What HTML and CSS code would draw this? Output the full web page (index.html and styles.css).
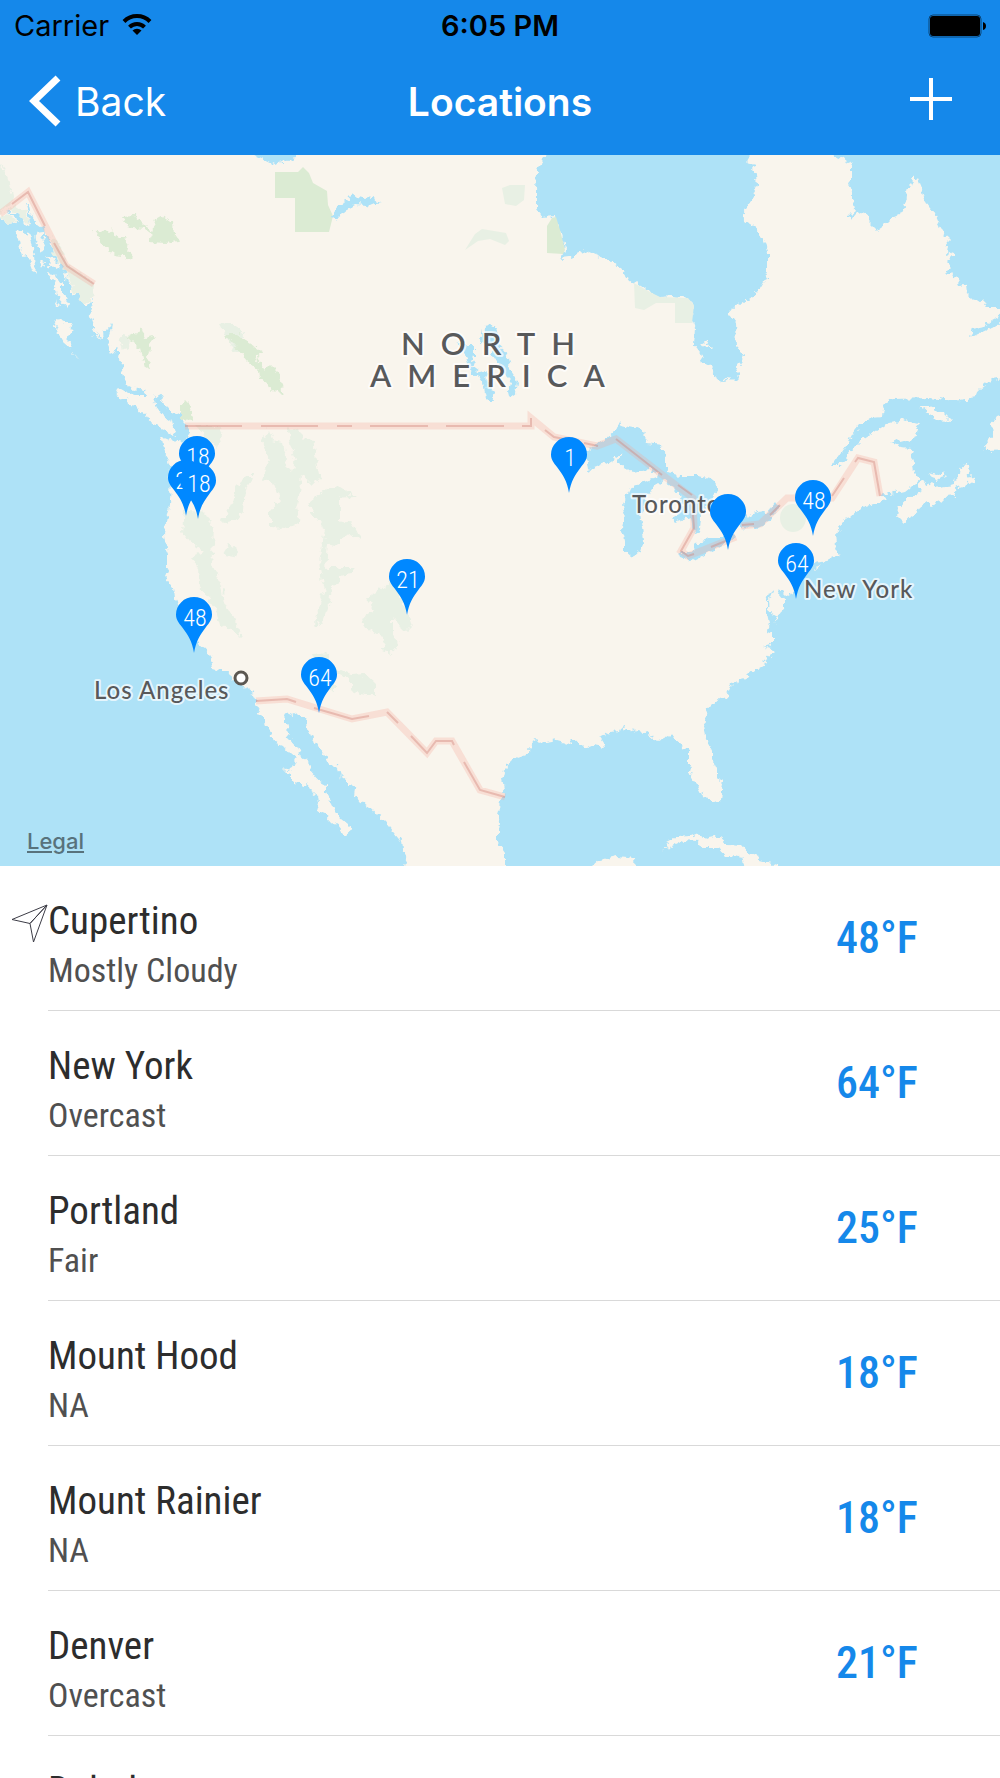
FILE: index.html
```html
<!DOCTYPE html>
<html lang="en">
<head>
  <meta charset="UTF-8">
  <meta name="viewport" content="width=device-width, initial-scale=1.0">
  <title>Locations</title>
  <link rel="stylesheet" href="styles.css">
</head>
<body>
  <header class="header">
    <div class="status-bar">
      <div class="carrier">
        <span>Carrier</span>
        <svg class="wifi" viewBox="0 0 30 22" aria-hidden="true">
          <path d="M15 22l-4.500-4.500a6.400 6.400 0 0 1 9 0z"/>
          <path class="wifi-arc" d="M7.500 14.200a10.600 10.600 0 0 1 15 0M2 8.500a18.400 18.400 0 0 1 26 0"/>
        </svg>
      </div>
      <span class="time">6:05 PM</span>
      <svg class="battery" viewBox="0 0 58 24" aria-hidden="true">
        <rect class="battery-frame" x="1" y="1" width="52" height="22" rx="4"/>
        <rect x="2" y="2" width="50" height="20" rx="3"/>
        <path d="M55 8q3 1 3 4t-3 4z"/>
      </svg>
    </div>
    <nav class="nav-bar">
      <a class="back" href="#">
        <svg class="chevron" viewBox="0 0 32 52" aria-hidden="true"><path d="M29 3L5 26l24 23"/></svg>
        <span>Back</span>
      </a>
      <h1 class="title">Locations</h1>
      <button class="add" type="button" aria-label="Add location">
        <svg class="plus" viewBox="0 0 42 42" aria-hidden="true"><path d="M21 0v42M0 21h42"/></svg>
      </button>
    </nav>
  </header>

  <main>
    <section class="map" aria-label="Map of locations">
      <svg class="map-canvas" viewBox="0 155 1000 711">
        <defs>
          <path id="pin" d="M0 56C-2 44-6 38-12 30C-15 26-18 23-18 17.500A18 17.500 0 0 1 18 17.500C18 23 15 26 12 30C6 38 2 44 0 56z"/>
          <!-- Breaks the straight segments into a ragged coastline -->
          <filter id="ragged" filterUnits="userSpaceOnUse" x="-10" y="145" width="1020" height="731" color-interpolation-filters="sRGB">
            <feTurbulence type="fractalNoise" baseFrequency="0.17" numOctaves="2" seed="4"/>
            <feDisplacementMap in="SourceGraphic" scale="9" xChannelSelector="R" yChannelSelector="G"/>
          </filter>
        </defs>

        <!-- Land -->
        <g class="land" filter="url(#ragged)">
          <path d="M-9 145L-9 218 0 218 8 224 17 223 15 217 7 211 14 213 20 216 26 226 30 225 28 213 25 202 28 203 30 212 33 216 35 222 39 225 43 228 44 235 50 239 52 249 57 252 60 258 64 266 69 270 67 276 70 284 72 286 72 296 78 293 84 305 88 305 93 300 93 305 89 314 92 322 95 330 101 336 104 339 103 331 108 329 112 323 111 332 107 338 111 348 108 352 113 355 116 347 119 350 119 357 123 362 122 370 125 379 127 381 126 385 134 389 141 388 146 390 142 393 147 396 137 396 127 392 120 388 115 391 120 398 127 400 128 404 137 405 140 413 146 416 152 424 161 428 168 433 174 436 176 432 173 422 164 416 157 408 152 397 157 395 163 396 161 402 167 406 173 414 180 411 180 419 185 424 190 430 188 437 186 442 178 441 171 440 161 436 164 449 168 461 171 470 170 505 167 522 164 535 166 547 169 554 169 568 165 577 173 587 174 598 179 606 183 620 190 635 200 645 206 650 211 658 213 669 220 671 228 671 232 678 238 682 244 686 251 691 255 698 257 709 263 717 267 728 273 738 276 743 283 746 290 754 296 759 293 767 287 770 283 769 290 776 290 781 300 783 307 786 311 791 318 796 319 804 317 811 325 814 332 822 338 826 346 836 352 831 348 824 343 820 338 817 334 808 330 800 326 793 326 785 319 781 310 770 308 762 300 755 297 747 289 738 287 727 284 717 285 711 293 715 297 713 302 716 308 720 309 730 312 737 319 748 325 756 330 765 337 766 340 775 347 780 347 785 355 787 354 797 362 802 370 807 377 815 385 822 393 832 401 842 402 850 407 858 403 875H505L505 853 498 843 498 831 500 823 498 815 500 802 505 795 502 780 504 771 506 765 516 757 530 752 531 743 536 740 539 743 557 740 568 743 572 739 577 741 587 748 594 745 605 747 599 738 610 732 620 731 622 727 625 732 634 728 636 731 646 732 658 741 668 736 675 738 680 745 689 751 689 763 692 768 690 775 697 785 701 793 707 797 713 804 720 801 722 782 717 777 717 768 713 760 713 753 707 740 704 727 706 714 709 707 715 701 727 695 732 684 740 679 748 677 757 669 767 663 764 661 775 652 773 648 763 647 770 645 773 643 773 634 767 632 769 623 767 613 767 600 769 594 774 589 769 600 770 613 777 617 775 623 777 620 780 613 784 607 784 599 779 593 780 589 787 596 795 592 797 580 804 574 812 563 830 559 840 555 835 550 837 545 836 535 841 525 845 518 851 516 860 508 870 505 885 501 882 493 890 494 907 490 920 480 914 474 913 463 911 458 913 448 900 447 890 443 902 440 908 442 914 439 919 430 915 428 918 424 903 420 887 424 873 433 862 440 855 447 847 458 837 465 833 465 842 452 848 443 853 434 860 425 870 418 882 417 883 408 888 401 893 399 930 398 953 401 965 399 975 397 980 390 992 380 1009 377V318L991 328 980 333 970 338 973 328 984 326 992 320 1009 311V307L985 307 986 303 979 299 973 301 967 295 966 286 960 284 957 277 950 275 947 272 952 267 947 262 950 258 955 256 954 252 948 254 949 247 944 245 949 239 944 235 941 226 938 220 935 213 926 202 923 196 921 189 917 179 914 176 911 186 907 190 908 198 903 207 900 214 893 217 887 223 877 230 869 222 868 214 863 212 858 213 854 217 852 220 847 215 854 214 855 208 852 194 849 185 851 180 851 165 854 162 848 164 845 159 836 156 830 154V145H750V154L747 163 755 165 752 170 756 175 757 185 754 191 752 200 743 213 744 220 756 228 761 235 768 252 768 273 763 283 757 293 745 301 729 309 731 316 736 322 737 347 743 356 741 363 737 370 738 377 735 380 731 376 724 382 718 380 715 373 710 365 703 362 700 353 694 345 695 327 692 318 693 303 688 298 672 296 660 297 650 292 641 285 630 281 623 270 613 262 600 257 585 251 570 257 562 258 565 250 560 230 555 217 542 218 536 210 536 190 537 172 541 168 545 154V145z"/>
          <path d="M15 232L22 229 26 235 30 230 31 240 33 246 34 256 36 274 33 270 28 256 22 257 21 249 18 238z"/>
          <path d="M35 231L42 230 42 237 45 245 41 253 37 247z"/>
          <path d="M45 255L53 258 61 266 55 269 49 266 50 261zM48 273L55 274 58 279 62 284 62 293 68 303 67 307 60 299 54 287 56 282zM40 261l4 2-2 5zM62 273l5-2-1 9z"/>
          <path d="M54 298L57 303 61 307 57 306z"/>
          <path d="M55 323L59 320 65 323 72 323 70 332 68 338 72 348 65 346 60 337zM71 350l9 10-7-7z"/>
          <path d="M91 327L97 331 101 340 95 335z"/>
          <path d="M898 508L908 499 922 491 918 487 923 480 930 485 940 487 953 485 957 477 961 470 964 465 968 464 969 476 974 480 965 486 955 489 956 496 945 497 940 502 932 505 927 502 920 507 915 514 907 520 904 524 897 517zM927 473l10 2 8-3 2 4-9 3-6-2z"/>
          <path d="M919 407L928 407 943 413 951 421 937 420z"/>
          <path d="M698 344L703 341 708 342 713 350 705 346z"/>
          <path d="M983 446L993 434 992 425 1000 412 1009 405V450L985 451z"/>
          <path d="M662 851L668 846 666 842 676 837 691 836 696 834 710 838 719 836 728 844 742 845 750 854 757 856 760 860 778 865V875H745L741 855 733 854 725 856 718 848 703 848 698 841 684 840z"/>
          <path d="M592 867L600 860 617 856 635 858 636 875H592zM814 568l8-2-6 4z"/>
        </g>

        <!-- Parks and forests -->
        <g class="forest" filter="url(#ragged)">
          <path d="M-9 154L0 164 6 172 13 200 0 213H-9z"/>
          <path d="M6 210L18 206 26 212 30 225 24 222 15 211zM0 217L7 212 17 222 8 224z"/>
          <path d="M52 235L60 245 67 264 94 284 93 297 84 305 74 290 66 272 52 252z"/>
          <path d="M119 337L125 333 130 336 129 348 122 350zM220 324L229 323 244 332 242 338 230 338 241 352 235 352z"/>
          <path d="M195 426H223L217 448 209 441z"/>
          <path d="M262 440L269 430 273 440 283 443 286 455 285 465 292 472 295 460 290 440 286 426 298 431 305 438 313 440 316 460 320 479 312 484 302 475 300 492 296 507 299 524 285 528 270 527 270 510 280 499 274 483 262 478 270 460z"/>
          <path d="M222 522L232 502 235 488 247 476 254 476 245 490 243 511 236 520 225 523z"/>
          <path d="M184 510L205 513 214 532 211 565 222 585 225 604 235 619 242 637 220 625 215 608 199 586 198 567 190 558 204 552 189 541 182 532z"/>
          <path d="M223 555L230 543 237 548 234 557zM308 505L325 490 340 487V546L328 543 326 570 340 566V584L332 586 330 602 323 622 315 625 320 600 325 590 319 562 325 530z"/>
          <path d="M330 518L343 521 355 525 362 541 350 534 338 539 332 546zM330 567L355 567 352 574 330 577zM330 492L340 487 356 496 330 497z"/>
          <path d="M367 598L380 590 390 582 402 600 408 615 412 626 407 631 402 630 393 617 393 635 399 640 395 649 390 653 383 650 384 638 376 633 368 630 361 619 376 611z"/>
          <path d="M313 655L329 653 328 665 340 670 352 675 366 674 375 682 375 696 351 691V679L335 672V690L325 687z"/>
        </g>
        <g class="forest">
          <path d="M502 188L510 185 525 185 524 200 516 206 505 204zM465 250L475 234 482 229 506 233 509 241 505 245 490 239 478 241z"/>
          <path d="M634 283L650 292 660 297 688 298 694 305 692 323 675 323V303H656L644 310 635 308z"/>
          <ellipse cx="793" cy="518" rx="13" ry="14"/>
        </g>
        <g class="park" filter="url(#ragged)">
          <path d="M94 231L107 232 112 229 117 237 128 240 127 248 133 257 127 262 124 256 115 255 106 248zM122 217L134 216 142 221 152 231 156 218 163 216 173 223 174 233 179 241 165 243 150 242 153 235 145 229 134 228 127 226z"/>
          <path d="M128 338L136 333 141 327 145 338 156 335 148 345 149 352 147 358 151 367 145 368 140 350z"/>
          <path d="M224 334L238 334 250 343 261 350 257 360 265 370 270 365 278 373 280 381 284 398 276 390 270 393 271 386 260 378 259 371 247 361 234 345z"/>
          <path d="M180 406L185 400 190 405 189 412 193 421 180 420z"/>
        </g>
        <g class="park">
          <path d="M275 172H298L303 167 309 173 313 183 327 191 328 205 333 216 329 232H295V198H275z"/>
          <path d="M547 226L552 218 556 217 560 230 565 250 563 254 547 253z"/>
        </g>

        <!-- Lakes -->
        <g class="lake" filter="url(#ragged)">
          <path d="M252 154V145H301V154L291 160 275 165zM330 218L341 203 348 200 353 193 358 197 373 199 380 202 371 204 367 206 355 205 344 211 338 219z"/>
          <path d="M483 327L496 324 499 333 496 342 505 350 509 362 511 372 518 382 516 394 510 398 508 390 511 380 503 372 492 354 491 345 481 342zM457 342L463 345 475 345 475 357 472 366 480 372 487 370 488 383 495 395 492 401 488 401 484 384 479 377 472 373 468 360z"/>
          <path d="M585 452L606 439 615 431 620 424 640 428 647 443 662 445 661 455 668 471 663 475 650 470 632 472 618 462 623 453 607 463 588 470z"/>
          <path d="M660 443L666 452 667 460 667 474 680 476 698 476 713 480 719 490 711 497 716 508 705 506 701 515 700 530 693 532 691 517 676 523 672 518 683 507 682 500 673 487 664 480 653 488 647 497 640 514 643 528 645 540 640 553 632 557 625 551 625 541 622 528 625 518 622 506 632 486 656 478 660 470z"/>
          <path d="M678 552L692 552 695 544 710 538 723 538 732 532 736 537 717 548 700 557 692 561 680 557zM737 525L742 519 757 512 768 511 775 502 779 508 767 523 757 528 740 527z"/>
        </g>

        <!-- National borders: soft band with a dashed line on top -->
        <g class="border">
          <path d="M0 214L28 192 66 266 94 284M185 426H531V418L554 437 597 446 616 439 660 473 693 498 694 528 681 551 688 556 736 537M741 526L760 524 787 498 832 498 858 458 874 462 880 496M256 701L287 699 352 719 387 712 427 753 436 741H452L480 790 505 797"/>
        </g>
        <g class="border-line">
          <path d="M12 204L28 192 45 226M54 243L67 266 94 284M185 426H242M261 426H318M337 426H352M370 426H428M446 426H504M522 426H531V418M545 430L554 437 574 441M584 443L598 446M616 439L662 475M678 485L692 495M693 515L694 528 681 551 688 556 694 554M711 547L728 540M742 525L754 524M770 515L780 505M832 496L844 478M855 462L858 458 874 462 880 496M256 701L287 699 296 702M314 708L352 719 369 716M387 712L398 723M411 736L427 753 436 741H452L454 745M464 762L480 790 505 797"/>
        </g>

        <!-- Place names -->
        <g class="region-name">
          <text x="401" y="355">NORTH</text>
          <text x="370" y="387">AMERICA</text>
        </g>
        <g class="city-name">
          <text x="632" y="513">Toronto</text>
          <text x="94" y="699">Los Angeles</text>
          <text x="804" y="598">New York</text>
        </g>
        <circle class="city-dot" cx="241" cy="678" r="6"/>

        <!-- Temperature pins -->
        <g class="pin">
          <g transform="translate(197 436)"><use href="#pin"/><text x="1" y="29">18</text></g>
          <g transform="translate(186 460)"><use href="#pin"/><text x="1" y="29">25</text></g>
          <g transform="translate(198 463)"><use href="#pin"/><text x="1" y="29">18</text></g>
          <g transform="translate(194 597)"><use href="#pin"/><text x="1" y="29">48</text></g>
          <g transform="translate(319 657)"><use href="#pin"/><text x="1" y="29">64</text></g>
          <g transform="translate(407 559)"><use href="#pin"/><text x="1" y="29">21</text></g>
          <g transform="translate(569 437)"><use href="#pin"/><text x="1" y="29">1</text></g>
          <g transform="translate(728 494)"><use href="#pin"/></g>
          <g transform="translate(813 480)"><use href="#pin"/><text x="1" y="29">48</text></g>
          <g transform="translate(796 543)"><use href="#pin"/><text x="1" y="29">64</text></g>
        </g>
      </svg>
      <a class="legal" href="#">Legal</a>
    </section>

    <ul class="locations">
      <li class="location">
        <svg class="current" viewBox="0 0 38 40" aria-hidden="true"><path d="M36 1L1 15.500l18 4zM36 1L19 19.500 22.500 38z"/></svg>
        <div class="place">
          <h2 class="name">Cupertino</h2>
          <p class="weather">Mostly Cloudy</p>
        </div>
        <span class="temp">48°F</span>
      </li>
      <li class="location">
        <div class="place">
          <h2 class="name">New York</h2>
          <p class="weather">Overcast</p>
        </div>
        <span class="temp">64°F</span>
      </li>
      <li class="location">
        <div class="place">
          <h2 class="name">Portland</h2>
          <p class="weather">Fair</p>
        </div>
        <span class="temp">25°F</span>
      </li>
      <li class="location">
        <div class="place">
          <h2 class="name">Mount Hood</h2>
          <p class="weather">NA</p>
        </div>
        <span class="temp">18°F</span>
      </li>
      <li class="location">
        <div class="place">
          <h2 class="name">Mount Rainier</h2>
          <p class="weather">NA</p>
        </div>
        <span class="temp">18°F</span>
      </li>
      <li class="location">
        <div class="place">
          <h2 class="name">Denver</h2>
          <p class="weather">Overcast</p>
        </div>
        <span class="temp">21°F</span>
      </li>
      <li class="location">
        <div class="place">
          <h2 class="name">Duluth</h2>
        </div>
      </li>
    </ul>
  </main>
</body>
</html>
```
FILE: styles.css
```css
* {
  box-sizing: border-box;
}
body {
  margin: 0;
  background: #fff;
  color: #2d2d2d;
  font-family: "Roboto Condensed", "Liberation Sans Narrow", sans-serif;
}

/* Header */
.header {
  background: #1588ea;
  font-family: Inter, sans-serif;
}
.status-bar {
  display: grid;
  grid-template-columns: 1fr auto 1fr;
  align-items: center;
  height: 51px;
  padding: 0 14px;
  color: #000;
  font-size: 29px;
}
.carrier {
  display: flex;
  align-items: center;
  gap: 13px;
}
.wifi {
  width: 30px;
  height: 22px;
  margin-bottom: 4px;
}
.wifi-arc {
  fill: none;
  stroke: #000;
  stroke-width: 4;
}
.time {
  font-weight: 600;
}
.battery {
  width: 58px;
  height: 24px;
  justify-self: end;
}
.battery-frame {
  fill: none;
  stroke: #0a4475;
  stroke-width: 1;
}
.nav-bar {
  display: grid;
  grid-template-columns: 1fr auto 1fr;
  align-items: center;
  height: 104px;
  padding: 0 29px 4px;
  color: #fff;
  font-size: 39px;
}
.back {
  display: flex;
  align-items: center;
  gap: 14px;
  color: #fff;
  text-decoration: none;
}
.chevron {
  width: 32px;
  height: 52px;
  fill: none;
  stroke: #fff;
  stroke-width: 7;
}
.title {
  margin: 0;
  font-size: 39px;
  font-weight: 600;
}
.add {
  display: flex;
  justify-self: end;
  margin-right: 19px;
  padding: 0 0 4px;
  border: 0;
  background: none;
  cursor: pointer;
}
.plus {
  width: 42px;
  height: 42px;
  stroke: #fff;
  stroke-width: 4;
}

/* Map */
.map {
  position: relative;
  background: #aee2f7;
}
.map-canvas {
  display: block;
  width: 100%;
}
.land {
  fill: #f9f5ed;
}
.forest {
  fill: #e8f0e4;
}
.park {
  fill: #dbebd3;
}
.lake {
  fill: #aee2f7;
}
.border {
  fill: none;
  stroke: #f9a598;
  stroke-opacity: 0.28;
  stroke-width: 7;
}
.border-line {
  fill: none;
  stroke: #cf8278;
  stroke-opacity: 0.4;
  stroke-width: 2;
}
.region-name,
.city-name {
  fill: #58595b;
  stroke: #fff;
  stroke-opacity: 0.7;
  stroke-width: 4;
  stroke-linejoin: round;
  paint-order: stroke;
  font-family: Lato, sans-serif;
}
.region-name {
  font-size: 31px;
  font-weight: 600;
  letter-spacing: 16px;
}
.city-name {
  font-size: 24px;
  font-weight: 500;
  letter-spacing: 1px;
}
.city-dot {
  fill: #fff;
  stroke: #5c5852;
  stroke-width: 3;
}
.pin {
  fill: #0088ff;
  font-size: 24px;
  font-weight: 300;
  text-anchor: middle;
}
.pin text {
  fill: #fff;
}
.legal {
  position: absolute;
  left: 27px;
  bottom: 12px;
  color: #58727c;
  font-family: Inter, sans-serif;
  font-size: 22px;
  font-weight: 500;
}

/* Locations list */
.locations {
  margin: 0;
  padding: 0 0 0 48px;
  list-style: none;
}
.location {
  position: relative;
  display: flex;
  align-items: center;
  justify-content: space-between;
  height: 145px;
  border-bottom: 1px solid #d9d9d9;
}
.current {
  position: absolute;
  top: 38px;
  left: -37px;
  width: 38px;
  height: 40px;
  fill: none;
  stroke: #3c3c46;
  stroke-width: 1;
}
.place {
  align-self: flex-start;
  padding-top: 30px;
}
.name {
  margin: 0;
  font-size: 39px;
  font-weight: 400;
  line-height: 50px;
}
.weather {
  margin: 0;
  color: #505050;
  font-size: 34px;
  line-height: 48px;
}
.temp {
  width: 164px;
  color: #1588ea;
  font-size: 44px;
  font-weight: 500;
}
```
